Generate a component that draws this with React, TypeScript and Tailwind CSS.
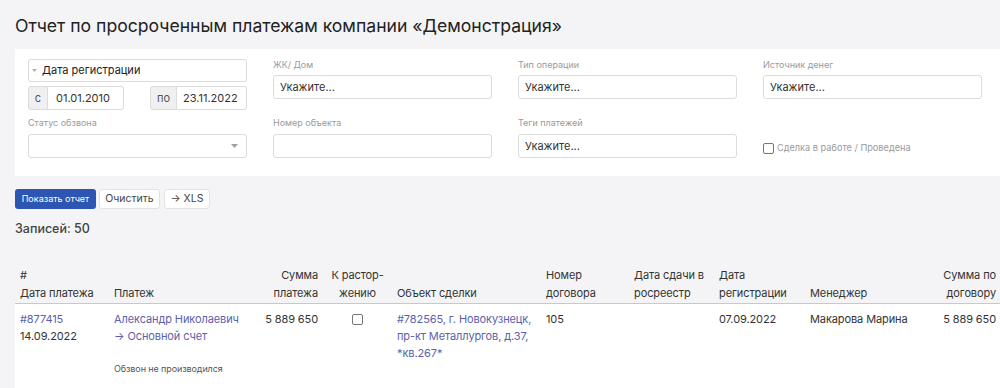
import React from "react";

const Caret = () => (
  <svg width="7" height="4" viewBox="0 0 7 4" className="shrink-0">
    <path d="M0 0 L7 0 L3.5 4 Z" fill="#a0a0a0" />
  </svg>
);

const Label = ({ children }: { children: React.ReactNode }) => (
  <div className="h-[12px] text-[9px] leading-[12px] text-[#9a9a9a]">{children}</div>
);

const Input = ({ value }: { value?: string }) => (
  <div className="h-[24px] rounded-[3px] border border-[#dcdcdc] bg-white px-[6px] text-[11px] leading-[22px] text-[#333]">
    {value}
  </div>
);

export default function App() {
  const link = "text-[#5c5fae]";
  return (
    <div
      className="min-h-[388px] w-[1000px] overflow-hidden bg-[#f4f4f6] text-[#333]"
      style={{ fontFamily: "Inter, 'Noto Sans', sans-serif" }}
    >
      <h1 className="h-[49px] pl-[15px] pt-[14px] text-[17.6px] leading-[24px] text-[#222]">
        Отчет по просроченным платежам компании «Демонстрация»
      </h1>

      <div className="ml-[15px] bg-white pb-[18px] pl-[13px] pt-[10px]">
        <div className="grid grid-cols-[219px_219px_219px_219px] gap-x-[26px] gap-y-[7px]">
          {/* col1 row1 */}
          <div className="flex flex-col gap-[4px]">
            <div className="flex h-[23px] items-center gap-[5px] rounded-[3px] border border-[#dcdcdc] pl-[3px] text-[11px] text-[#222]">
              <svg width="5" height="3" viewBox="0 0 5 3"><path d="M0 0 L5 0 L2.5 3 Z" fill="#b0b0b0" /></svg>
              <span>Дата регистрации</span>
            </div>
            <div className="flex h-[24px] items-stretch text-[11px]">
              <div className="flex w-[20px] items-center justify-center rounded-l-[3px] border border-[#dcdcdc] bg-[#f0f0f2] text-[#555]">с</div>
              <div className="flex w-[76px] items-center rounded-r-[3px] border border-l-0 border-[#dcdcdc] pl-[8px]">01.01.2010</div>
              <div className="ml-[26px] flex w-[27px] items-center justify-center rounded-l-[3px] border border-[#dcdcdc] bg-[#f0f0f2] text-[#555]">по</div>
              <div className="flex w-[70px] items-center rounded-r-[3px] border border-l-0 border-[#dcdcdc] pl-[6px]">23.11.2022</div>
            </div>
          </div>
          <div className="flex flex-col gap-[4px]">
            <Label>ЖК/ Дом</Label>
            <Input value="Укажите..." />
          </div>
          <div className="flex flex-col gap-[4px]">
            <Label>Тип операции</Label>
            <Input value="Укажите..." />
          </div>
          <div className="flex flex-col gap-[4px]">
            <Label>Источник денег</Label>
            <Input value="Укажите..." />
          </div>

          {/* row2 */}
          <div className="flex flex-col gap-[5px]">
            <Label>Статус обзвона</Label>
            <div className="flex h-[24px] items-center justify-end rounded-[3px] border border-[#dcdcdc] pr-[8px]">
              <Caret />
            </div>
          </div>
          <div className="flex flex-col gap-[5px]">
            <Label>Номер объекта</Label>
            <Input />
          </div>
          <div className="flex flex-col gap-[5px]">
            <Label>Теги платежей</Label>
            <Input value="Укажите..." />
          </div>
          <div className="flex items-end pb-[3px]">
            <div className="flex items-center gap-[3px]">
              <div className="h-[11px] w-[11px] rounded-[2px] border border-[#777]" />
              <span className="text-[9.2px] text-[#9a9a9a]">Сделка в работе / Проведена</span>
            </div>
          </div>
        </div>
      </div>

      <div className="ml-[15px] mt-[13px] flex h-[20px] items-stretch gap-[3px]">
        <div className="flex w-[81px] items-center justify-center rounded-[3px] bg-[#2d55b2] text-[9px] text-white">Показать отчет</div>
        <div className="flex w-[61px] items-center justify-center rounded-[3px] border border-[#e2e2e2] bg-white text-[10.5px] text-[#444]">Очистить</div>
        <div className="ml-[1px] flex w-[46px] items-center justify-center rounded-[3px] border border-[#e2e2e2] bg-white text-[10.5px] text-[#444]">→ XLS</div>
      </div>

      <div className="ml-[15px] mt-[11px] text-[12.5px] font-medium leading-[18px] text-[#444]">Записей: 50</div>

      <div className="ml-[15px] mt-[28px] w-[985px] text-[11px] leading-[18px] tracking-[-0.1px]">
        <div className="grid grid-cols-[94px_146px_68px_69px_149px_88px_85px_91px_120px_75px] items-end border-b border-[#c9c9cc] pb-[1px] text-[#333]">
          <div className="pl-[5px]">#<br />Дата платежа</div>
          <div className="pl-[5px]">Платеж</div>
          <div className="pr-[5px] text-right">Сумма<br />платежа</div>
          <div className="text-center">К растор-<br />жению</div>
          <div className="pl-[5px]">Объект сделки</div>
          <div className="pl-[5px]">Номер<br />договора</div>
          <div className="pl-[5px]">Дата сдачи в<br />росреестр</div>
          <div className="pl-[5px]">Дата<br />регистрации</div>
          <div className="pl-[5px]">Менеджер</div>
          <div className="pr-[4px] text-right">Сумма по<br />договору</div>
        </div>
        <div className="grid h-[90px] grid-cols-[94px_146px_68px_69px_149px_88px_85px_91px_120px_75px] items-start bg-white pt-[7px] leading-[17px] text-[#333]">
          <div className="pl-[5px]">
            <div className={link}>#877415</div>
            <div>14.09.2022</div>
          </div>
          <div className="pl-[5px]">
            <div className={link}>Александр Николаевич</div>
            <div className={link}>→ Основной счет</div>
            <div className="mt-[17px] text-[9px] leading-[14px] text-[#555]">Обзвон не производился</div>
          </div>
          <div className="pr-[5px] text-right">5 889 650</div>
          <div className="flex justify-center pt-[3px]">
            <div className="h-[11px] w-[11px] rounded-[2px] border border-[#777]" />
          </div>
          <div className={`pl-[5px] ${link}`}>
            #782565, г. Новокузнецк,<br />пр-кт Металлургов, д.37,<br />*кв.267*
          </div>
          <div className="pl-[5px]">105</div>
          <div className="pl-[5px]"></div>
          <div className="pl-[5px]">07.09.2022</div>
          <div className="pl-[5px]">Макарова Марина</div>
          <div className="pr-[4px] text-right">5 889 650</div>
        </div>
      </div>
    </div>
  );
}
